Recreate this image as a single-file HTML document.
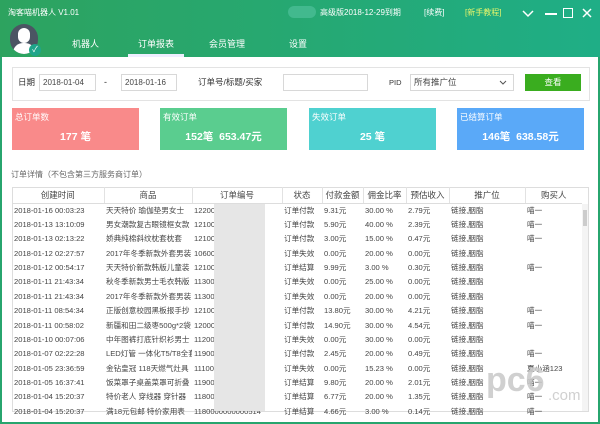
<!DOCTYPE html><html><head><meta charset="utf-8"><style>
*{margin:0;padding:0;box-sizing:border-box}
body{width:600px;height:424px;overflow:hidden;font-family:"Liberation Sans","Noto Sans CJK SC",sans-serif;font-size:9px;color:#333;background:#fff;position:relative}
.hdr{position:absolute;left:0;top:0;width:600px;height:57px;background:linear-gradient(90deg,#2da35f,#1fae86)}
.abs{position:absolute;white-space:nowrap;line-height:1}
.w{color:#fff}
.frame{position:absolute;left:0;top:57px;width:600px;height:367px;border:2px solid #27a56e;border-top:none}
.box{position:absolute;left:12px;top:67px;width:578px;height:34px;border:1px solid #e3e3e3}
.in{position:absolute;border:1px solid #d8d8d8;height:17px;top:74px;font-size:8px;line-height:15px;padding-left:3px;color:#444;background:#fff;white-space:nowrap}
.card{position:absolute;top:108px;height:42px;width:127px;color:#fff}
.card .t{position:absolute;left:3px;top:5px;font-size:8.5px;line-height:1;white-space:nowrap}
.card .v{position:absolute;left:0;right:0;top:24px;text-align:center;font-size:10.5px;font-weight:bold;line-height:1;white-space:nowrap}
table{position:absolute;left:12px;top:187px;width:570px;border-collapse:collapse;font-size:7.6px;table-layout:fixed}
th{height:16px;font-weight:normal;border-right:1px solid #e2e2e2;border-bottom:1px solid #ddd;font-size:8.5px;color:#444;white-space:nowrap;overflow:hidden}
td{height:14.4px;white-space:nowrap;overflow:hidden;padding-left:2px;color:#444;line-height:1}
</style></head><body>
<div class="hdr"></div>
<div class="abs w" style="left:8px;top:9px;font-size:8px">淘客喵机器人 V1.01</div>
<div class="abs" style="left:288px;top:6px;width:28px;height:12px;background:#4fc09a;border-radius:6px;opacity:.7"></div>
<div class="abs w" style="left:320px;top:9px;font-size:8px">高级版2018-12-29到期</div>
<div class="abs w" style="left:424px;top:9px;font-size:8px">[续费]</div>
<div class="abs" style="left:465px;top:9px;font-size:8px;color:#e8f56a">[新手教程]</div>
<svg class="abs" style="left:522px;top:10px" width="12" height="8"><path d="M1 1L6 6L11 1" stroke="#fff" stroke-width="1.5" fill="none"/></svg>
<div class="abs" style="left:545px;top:13px;width:12px;height:2px;background:#fff"></div>
<div class="abs" style="left:563px;top:8px;width:10px;height:10px;border:1px solid #fff"></div>
<svg class="abs" style="left:582px;top:8px" width="10" height="10"><path d="M1 1L9 9M9 1L1 9" stroke="#fff" stroke-width="1.5"/></svg>
<div class="abs" style="left:10px;top:24px;width:28px;height:30px;border-radius:14px;background:#4b5563;overflow:hidden"><div style="position:absolute;left:8px;top:4px;width:12px;height:15px;border-radius:6px;background:#fff"></div><div style="position:absolute;left:3px;top:19px;width:22px;height:14px;border-radius:10px 10px 0 0;background:#fff"></div></div>
<div class="abs" style="left:29px;top:44px;width:12px;height:12px;border-radius:6px;background:#1fa58a;color:#fff;font-size:8px;text-align:center;line-height:12px">✓</div>
<div class="abs w" style="left:72px;top:40px;font-size:9px">机器人</div>
<div class="abs w" style="left:138px;top:40px;font-size:9px">订单报表</div>
<div class="abs" style="left:128px;top:54px;width:56px;height:3px;background:#eef"></div>
<div class="abs w" style="left:209px;top:40px;font-size:9px">会员管理</div>
<div class="abs w" style="left:289px;top:40px;font-size:9px">设置</div>
<div class="frame"></div>
<div class="box"></div>
<div class="abs" style="left:18px;top:78px;font-size:8.5px">日期</div>
<div class="in" style="left:39px;width:57px">2018-01-04</div>
<div class="abs" style="left:104px;top:78px">-</div>
<div class="in" style="left:121px;width:56px">2018-01-16</div>
<div class="abs" style="left:198px;top:78px;font-size:8.5px">订单号/标题/买家</div>
<div class="in" style="left:283px;width:85px"></div>
<div class="abs" style="left:389px;top:79px;font-size:7.5px">PID</div>
<div class="in" style="left:410px;width:104px;font-size:8.5px">所有推广位<svg style="position:absolute;right:6px;top:5px" width="8" height="6"><path d="M1 1L4 4L7 1" stroke="#555" fill="none"/></svg></div>
<div class="abs" style="left:525px;top:74px;width:56px;height:17px;background:#3aad1f;color:#fff;text-align:center;line-height:17px;font-size:8.5px">查看</div>
<div class="card" style="left:12px;background:#f98a8a"><div class="t">总订单数</div><div class="v">177 笔</div></div>
<div class="card" style="left:160px;background:#5acd8f"><div class="t">有效订单</div><div class="v">152笔 &nbsp;653.47元</div></div>
<div class="card" style="left:309px;background:#4fd1d0"><div class="t">失效订单</div><div class="v">25 笔</div></div>
<div class="card" style="left:457px;background:#5aa9f8"><div class="t">已结算订单</div><div class="v">146笔 &nbsp;638.58元</div></div>
<div class="abs" style="left:11px;top:171px;font-size:8px;color:#666">订单详情（不包含第三方服务商订单）</div>
<div class="abs" style="left:12px;top:187px;width:577px;height:225px;border:1px solid #ddd"></div>
<table>
<colgroup><col style="width:92px"><col style="width:88px"><col style="width:90px"><col style="width:40px"><col style="width:41px"><col style="width:43px"><col style="width:43px"><col style="width:76px"><col style="width:57px"></colgroup>
<tr><th>创建时间</th><th>商品</th><th>订单编号</th><th>状态</th><th>付款金额</th><th>佣金比率</th><th>预估收入</th><th>推广位</th><th style="border-right:none">购买人</th></tr>
<tr><td>2018-01-16 00:03:23</td><td>天天特价 瑜伽垫男女士</td><td>1220000000000514</td><td>订单付款</td><td>9.31元</td><td>30.00 %</td><td>2.79元</td><td>链接,胭脂</td><td>喵一</td></tr>
<tr><td>2018-01-13 13:10:09</td><td>男女潮款复古眼镜框女款</td><td>1210000000000514</td><td>订单付款</td><td>5.90元</td><td>40.00 %</td><td>2.39元</td><td>链接,胭脂</td><td>喵一</td></tr>
<tr><td>2018-01-13 02:13:22</td><td>娇典纯棉斜纹枕套枕套</td><td>1210000000000514</td><td>订单付款</td><td>3.00元</td><td>15.00 %</td><td>0.47元</td><td>链接,胭脂</td><td>喵一</td></tr>
<tr><td>2018-01-12 02:27:57</td><td>2017年冬季新款外套男装</td><td>1060000000000029</td><td>订单失效</td><td>0.00元</td><td>20.00 %</td><td>0.00元</td><td>链接,胭脂</td><td></td></tr>
<tr><td>2018-01-12 00:54:17</td><td>天天特价新款韩版儿童装</td><td>1210000000000514</td><td>订单结算</td><td>9.99元</td><td>3.00 %</td><td>0.30元</td><td>链接,胭脂</td><td>喵一</td></tr>
<tr><td>2018-01-11 21:43:34</td><td>秋冬季新款男士毛衣韩版</td><td>1130000000000087</td><td>订单失效</td><td>0.00元</td><td>25.00 %</td><td>0.00元</td><td>链接,胭脂</td><td></td></tr>
<tr><td>2018-01-11 21:43:34</td><td>2017年冬季新款外套男装</td><td>1130000000000087</td><td>订单失效</td><td>0.00元</td><td>20.00 %</td><td>0.00元</td><td>链接,胭脂</td><td></td></tr>
<tr><td>2018-01-11 08:54:34</td><td>正版创意校园黑板报手抄</td><td>1210000000000514</td><td>订单付款</td><td>13.80元</td><td>30.00 %</td><td>4.21元</td><td>链接,胭脂</td><td>喵一</td></tr>
<tr><td>2018-01-11 00:58:02</td><td>新疆和田二级枣500g*2袋</td><td>1200000000000514</td><td>订单付款</td><td>14.90元</td><td>30.00 %</td><td>4.54元</td><td>链接,胭脂</td><td>喵一</td></tr>
<tr><td>2018-01-10 00:07:06</td><td>中年图裤打底针织衫男士</td><td>1120000000000696</td><td>订单失效</td><td>0.00元</td><td>30.00 %</td><td>0.00元</td><td>链接,胭脂</td><td></td></tr>
<tr><td>2018-01-07 02:22:28</td><td>LED灯管 一体化T5/T8全套</td><td>1190000000000514</td><td>订单付款</td><td>2.45元</td><td>20.00 %</td><td>0.49元</td><td>链接,胭脂</td><td>喵一</td></tr>
<tr><td>2018-01-05 23:36:59</td><td>金钻皇冠 118天燃气灶具</td><td>1110000000000371</td><td>订单失效</td><td>0.00元</td><td>15.23 %</td><td>0.00元</td><td>链接,胭脂</td><td>夏小涵123</td></tr>
<tr><td>2018-01-05 16:37:41</td><td>饭菜罩子桌盖菜罩可折叠</td><td>1190000000000514</td><td>订单结算</td><td>9.80元</td><td>20.00 %</td><td>2.01元</td><td>链接,胭脂</td><td>喵一</td></tr>
<tr><td>2018-01-04 15:20:37</td><td>特价老人 穿线器 穿针器</td><td>1180000000000514</td><td>订单结算</td><td>6.77元</td><td>20.00 %</td><td>1.35元</td><td>链接,胭脂</td><td>喵一</td></tr>
<tr><td>2018-01-04 15:20:37</td><td>满18元包邮 特价家用表</td><td>1180000000000514</td><td>订单结算</td><td>4.66元</td><td>3.00 %</td><td>0.14元</td><td>链接,胭脂</td><td>喵一</td></tr>
</table>
<div class="abs" style="left:214px;top:204px;width:51px;height:207px;background:#e6e6e6"></div>
<div class="abs" style="left:582px;top:204px;width:6px;height:207px;background:#f4f4f4"></div>
<div class="abs" style="left:583px;top:210px;width:4px;height:16px;background:#ccc"></div>
<div class="abs" style="left:486px;top:363px;font-size:34px;color:#c8c8c8;font-weight:bold;opacity:.85">pc6</div>
<div class="abs" style="left:548px;top:388px;font-size:15px;color:#c8c8c8;opacity:.85">.com</div>
</body></html>
